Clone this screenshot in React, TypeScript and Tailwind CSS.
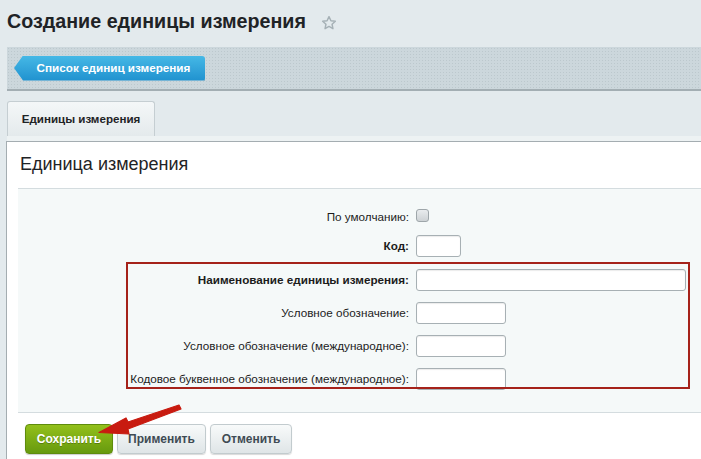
import React from "react";

const font = "font-['Liberation_Sans',Arial,sans-serif]";

function Field({
  label,
  bold,
  children,
  className = "",
}: {
  label: string;
  bold?: boolean;
  children: React.ReactNode;
  className?: string;
}) {
  return (
    <div className={`flex h-[21px] items-center ${className}`}>
      <div
        className={`w-[392px] pr-[1px] text-right text-[11.7px] text-[#1c1c1c] ${bold ? "font-bold" : ""}`}
      >
        {label}
      </div>
      <div className="ml-[6px] flex items-center">{children}</div>
    </div>
  );
}

function TextInput({ w }: { w: string }) {
  return (
    <div
      className={`${w} h-[22px] rounded-[3px] border border-[#a7b0b4] bg-white shadow-[inset_0_1px_1px_rgba(0,0,0,0.08)]`}
    />
  );
}

export default function App() {
  return (
    <div
      className={`relative h-[459px] w-[701px] overflow-hidden bg-[#e3eaed] ${font}`}
    >
      {/* page title */}
      <header className="flex h-[47px] items-center pl-[7px] pb-[3px]">
        <h1 className="text-[19.7px] font-bold leading-none text-[#1f2326]">
          Создание единицы измерения
        </h1>
        <svg
          className="ml-[15px] mt-[2px]"
          width="16"
          height="16"
          viewBox="0 0 24 24"
          fill="none"
          stroke="#a6b1b6"
          strokeWidth="2.2"
          strokeLinejoin="round"
        >
          <path d="M12 2.5l2.9 6.1 6.6.8-4.9 4.5 1.3 6.6L12 17.2l-5.9 3.3 1.3-6.6-4.9-4.5 6.6-.8z" />
        </svg>
      </header>

      {/* context toolbar */}
      <div className="ml-[7px] flex h-[44px] items-center border-b-2 border-[#a3aeb3] bg-[#ccd7dc] bg-[radial-gradient(#bcc8cd_0.8px,transparent_0.8px)] bg-[length:3px_3px] pl-[7px]">
        <a className="flex h-[25px] w-[191px] items-center justify-center rounded-r-[3px] bg-gradient-to-b from-[#45b8e6] to-[#1f92cf] pl-[8px] text-[11.7px] font-bold text-white shadow-[0_1px_0_#17729f] [clip-path:polygon(9px_0,100%_0,100%_100%,9px_100%,0_50%)]">
          Список единиц измерения
        </a>
      </div>

      {/* tabs */}
      <div className="ml-[7px] flex h-[45px] items-end pt-[10px]">
        <div className="flex h-[35px] w-[148px] items-center justify-center rounded-t-[3px] border border-b-0 border-[#c5ced2] bg-gradient-to-b from-[#f4f7f8] to-[#e4eaec] text-[11.6px] font-bold text-[#1f2326]">
          Единицы измерения
        </div>
      </div>
      <div className="ml-[7px] h-[5px] bg-[#edf2f3]" />

      {/* edit panel */}
      <main className="ml-[6px] h-[318px] border-l border-t border-[#a4adb1] bg-white">
        <h2 className="pl-[13px] pt-[11px] text-[18px] leading-[23px] text-[#1f2326]">
          Единица измерения
        </h2>

        <div className="relative ml-[11px] mt-[12px] border-y border-[#d4dcdf] bg-[#f5f9f9] pb-[23px] pt-[17px]">
          <Field label="По умолчанию:">
            <div className="h-[13px] w-[13px] -translate-y-[1px] rounded-[3px] border border-[#9ea6aa] bg-gradient-to-b from-[#e9ecee] to-[#cdd2d5]" />
          </Field>
          <Field label="Код:" bold className="mt-[8px]">
            <TextInput w="w-[45px]" />
          </Field>
          <Field
            label="Наименование единицы измерения:"
            bold
            className="mt-[13px]"
          >
            <TextInput w="w-[270px]" />
          </Field>
          <Field label="Условное обозначение:" className="mt-[12px]">
            <TextInput w="w-[90px]" />
          </Field>
          <Field
            label="Условное обозначение (международное):"
            className="mt-[12px]"
          >
            <TextInput w="w-[90px]" />
          </Field>
          <Field
            label="Кодовое буквенное обозначение (международное):"
            className="mt-[12px]"
          >
            <TextInput w="w-[90px]" />
          </Field>

          {/* highlighted group */}
          <div className="pointer-events-none absolute left-[108px] top-[73px] h-[127px] w-[564px] border-2 border-[#a5221a]" />
        </div>

        <div className="ml-[18px] mt-[11px] flex gap-[4px]">
          <button className="h-[30px] w-[88px] rounded-[4px] border border-[#5f8c0c] bg-gradient-to-b from-[#93c01b] to-[#679a0e] text-[12px] font-bold text-white shadow-[0_1px_1px_rgba(0,0,0,0.2)] [text-shadow:0_1px_0_rgba(0,0,0,0.25)]">
            Сохранить
          </button>
          <button className="h-[30px] w-[89px] rounded-[4px] border border-[#c2cbce] bg-gradient-to-b from-[#f8fafa] to-[#dfe5e7] text-[12px] font-bold text-[#3f4b54] shadow-[0_1px_1px_rgba(0,0,0,0.15)]">
            Применить
          </button>
          <button className="h-[30px] w-[82px] rounded-[4px] border border-[#c2cbce] bg-gradient-to-b from-[#f8fafa] to-[#dfe5e7] text-[12px] font-bold text-[#3f4b54] shadow-[0_1px_1px_rgba(0,0,0,0.15)]">
            Отменить
          </button>
        </div>
      </main>

      {/* pointer arrow */}
      <svg
        className="pointer-events-none absolute left-[95px] top-[400px]"
        width="90"
        height="40"
        viewBox="0 0 90 40"
      >
        <path
          d="M84 5 L33 22 L31 18 L4 32.5 L34 34 L33 29 L86 9 Z"
          fill="#c81b10"
          stroke="#c81b10"
          strokeWidth="1.2"
          strokeLinejoin="round"
        />
      </svg>
    </div>
  );
}
